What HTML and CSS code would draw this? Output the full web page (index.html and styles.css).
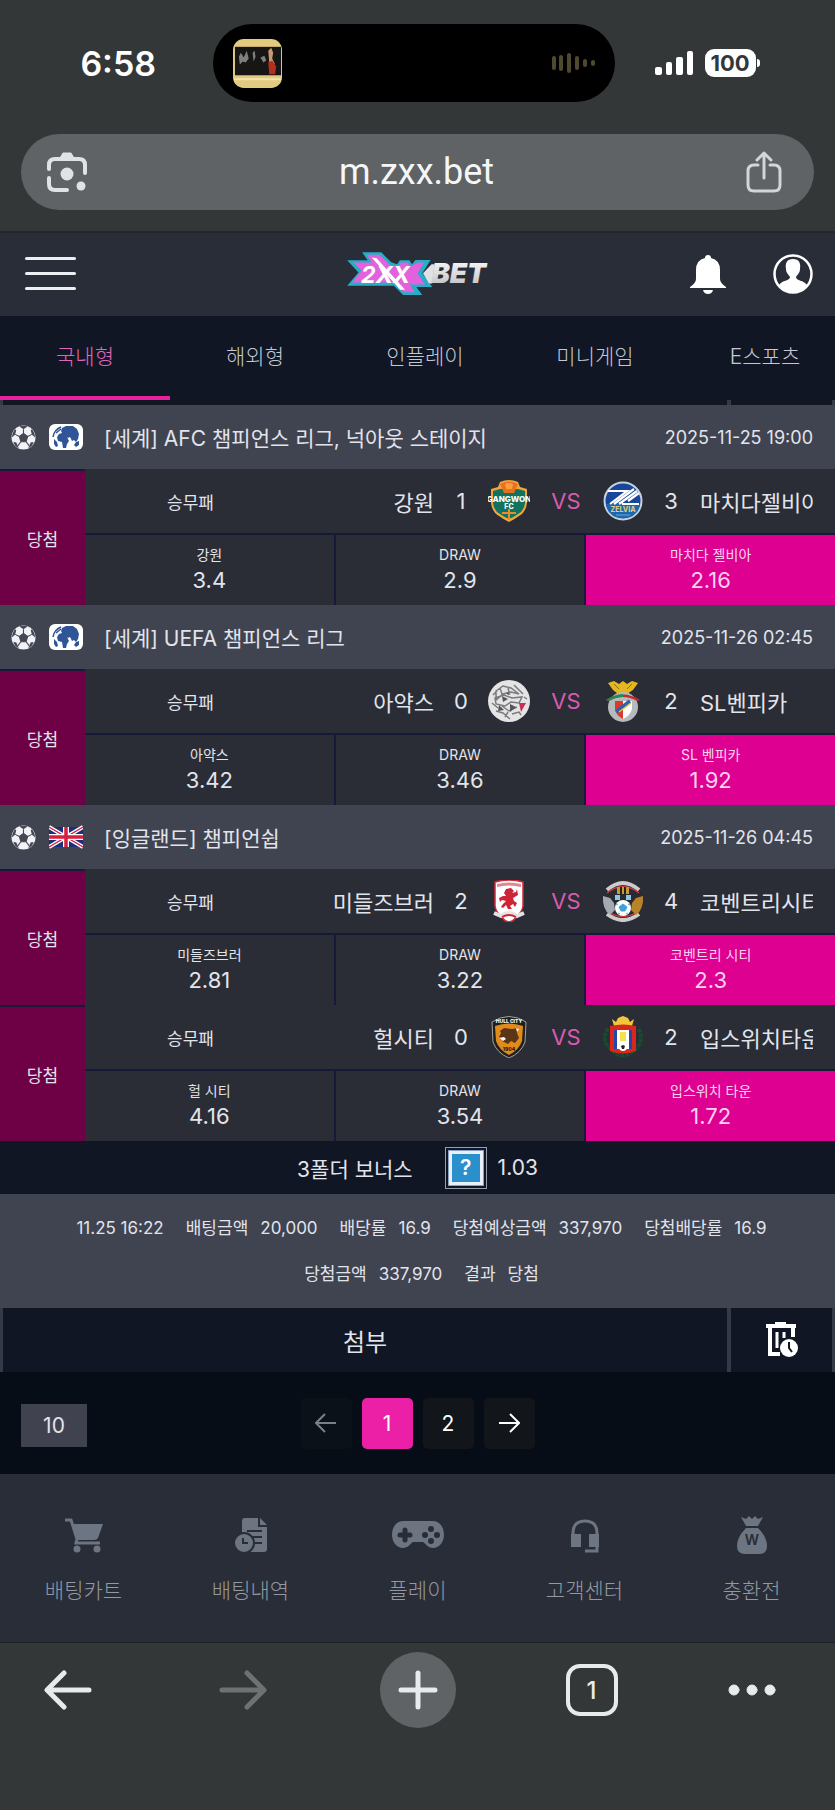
FILE: index.html
```html
<!DOCTYPE html>
<html lang="ko">
<head>
    <meta charset="UTF-8">
    <meta name="viewport" content="width=device-width, initial-scale=1.0">
    <title>ZXX BET</title>
    <link rel="stylesheet" href="styles.css">
</head>
<body>
    <!-- shared icons -->
    <svg class="sprite" aria-hidden="true">
        <symbol id="ball" viewBox="0 0 24 24">
            <circle cx="12" cy="12" r="11.500" fill="#f2f3f6"/>
            <path d="M12 8l4 3-1.500 5h-5L8 11zM12 8V4M16 11l4-2M14.500 16l3 4M9.500 16l-3 4M8 11L4 9" fill="#454854" stroke="#454854"/>
            <path d="M8 1.500l4 2.500 4-2.500q-4-1.500-8 0zM20 9l3 3q0-5-3-8l-1 1zM4 9l-3 3q0-5 3-8l1 1zM17.500 20l-1 2.500q4-2 5.500-6h-3zM6.500 20l1 2.500q-4-2-5.500-6h3z" fill="#454854"/>
        </symbol>
        <symbol id="world" viewBox="0 0 34 26">
            <rect width="34" height="26" rx="6" fill="#fff"/>
            <path d="M13 4l4-2h7l4 3 2 5-1 5-2 3-2-2-2 1-2-4-2 1-1-1 2 4-2 3-1 4h-3l-1-6-4-1-1-4 2-3 3-1-1-2z" fill="#2f5596"/>
            <path d="M4 13q1-7 8-10M7 9l5-4" fill="none" stroke="#2f5596" stroke-width="1.500"/>
            <path d="M5 15l3 3 1 4-2 1-2-3zM27 18l3-1v4l-3 2-2-2z" fill="#2f5596"/>
        </symbol>
        <symbol id="uk" viewBox="0 0 34 20">
            <rect width="34" height="20" fill="#1c2f7c"/>
            <path d="M0 0l34 20M34 0L0 20" stroke="#fff" stroke-width="4"/>
            <path d="M0 0l34 20M34 0L0 20" stroke="#d81f3c" stroke-width="1.300"/>
            <path d="M17 0v20M0 10h34" stroke="#fff" stroke-width="6"/>
            <path d="M17 0v20M0 10h34" stroke="#d81f3c" stroke-width="3.500"/>
        </symbol>
    </svg>

    <div class="status-bar">
        <span class="clock">6:58</span>
        <div class="island">
            <svg class="album" viewBox="0 0 50 50" aria-hidden="true">
                <rect width="50" height="50" rx="11" fill="#e2cb80"/>
                <rect x="2" y="8" width="47" height="29" fill="#171614"/>
                <path d="M6 18l2-4 3 5 3-7 2 8-3 4-3-1-3 3zM20 14l2-2 1 6-2 5zM28 19l4-2 2 5-3 2z" fill="#7d817d"/>
                <path d="M36 12l3-3 2 5-1 6 3 6-6-2z" fill="#c99a72"/>
                <path d="M36 24l4-2 4 6-1 8h-6z" fill="#b5301c"/>
                <path d="M1 41h48" stroke="#f3e4ac" stroke-width="2"/>
            </svg>
            <svg class="wave" viewBox="0 0 44 20" aria-hidden="true">
                <path d="M3 5v10M10 4v12M18 2v16M26 5v10M34 8v4M42 9v2" stroke="#50492f" stroke-width="4" stroke-linecap="round"/>
            </svg>
        </div>
        <div class="signals">
            <svg class="bars" viewBox="0 0 38 26" aria-hidden="true">
                <rect x="0" y="17" width="7" height="8" rx="2"/>
                <rect x="11" y="12" width="6" height="13" rx="2"/>
                <rect x="21" y="7" width="7" height="18" rx="2"/>
                <rect x="32" y="1" width="6" height="24" rx="2"/>
            </svg>
            <span class="battery">100</span>
        </div>
    </div>

    <div class="address-bar">
        <svg class="lens" viewBox="0 0 40 40" fill="none" stroke="#dfe3e8" stroke-width="4" stroke-linecap="round" aria-hidden="true">
            <path d="M2 17v-4q0-6 6-6h24q6 0 6 6v8M2 26v6q0 6 6 6h12"/>
            <path d="M13 6l3-5h8l3 5z" fill="#dfe3e8" stroke-width="1"/>
            <circle cx="20" cy="22" r="6.500" fill="#dfe3e8" stroke="none"/>
            <circle cx="34" cy="34" r="4.500" fill="#dfe3e8" stroke="none"/>
        </svg>
        <input class="address" type="text" value="m.zxx.bet" aria-label="주소">
        <svg class="share" viewBox="0 0 36 42" fill="none" stroke="#d3d6d9" stroke-width="3" stroke-linecap="round" stroke-linejoin="round" aria-hidden="true">
            <path d="M12 14H8q-6 0-6 6v14q0 6 6 6h20q6 0 6-6V20q0-6-6-6h-4M18 27V2M11 9l7-7 7 7"/>
        </svg>
    </div>

    <header class="header">
        <button class="menu-btn" aria-label="메뉴"><i></i><i></i><i></i></button>
        <svg class="logo" viewBox="50 34 438 136" role="img" aria-label="ZXX BET">
            <defs>
                <linearGradient id="silver" x1="0" y1="0" x2="0" y2="1">
                    <stop offset="0" stop-color="#fff"/>
                    <stop offset="1" stop-color="#b9b9bd"/>
                </linearGradient>
            </defs>
            <path d="M52 62h62L97 38h58l30 30 18 6 8-12h29l8 12 10-13h46l-25 40 30 42h-48l18 24h-58l-28-28H52l34-40z" fill="#25aec6"/>
            <path d="M70 69h56l-14-24h38l36 36 24-5 4-7h20l10 12 20-12h20l-19 32 22 34h-46l16 24h-34l-30-30H66l30-36z" fill="#e361dd"/>
            <path d="M126 54l15 2 86 95h-15z" fill="#fff"/>
            <text x="94" y="130" class="logo-mark">2XX</text>
            <path d="M281 101l26-27h9l-7 58h-10z" fill="#e1e1e4"/>
            <text x="306" y="132" class="logo-name">BET</text>
        </svg>
        <div class="header-actions">
            <button class="icon-btn" aria-label="알림">
                <svg width="38" height="40" viewBox="0 0 38 40" fill="#fff">
                    <path d="M19 1q3 0 3 3 9 2 9 12v9q0 4 6 8v1H1v-1q6-4 6-8v-9Q7 6 16 4q0-3 3-3zM14 36h10q-1 4-5 4t-5-4z"/>
                </svg>
            </button>
            <button class="icon-btn" aria-label="내 정보">
                <svg width="40" height="40" viewBox="0 0 40 40">
                    <circle cx="20" cy="20" r="18.500" fill="none" stroke="#fff" stroke-width="2.500"/>
                    <path d="M20 5c6 0 8 4 7 10 0 4-3 6-4 8 0 4 8 3 11 8-3 5-8 8-14 8S9 36 6 31c3-5 11-4 11-8-1-2-4-4-4-8-1-6 1-10 7-10z" fill="#fff"/>
                </svg>
            </button>
        </div>
    </header>

    <nav class="tabs">
        <a class="tab active" href="#">국내형</a>
        <a class="tab" href="#">해외형</a>
        <a class="tab" href="#">인플레이</a>
        <a class="tab" href="#">미니게임</a>
        <a class="tab" href="#">E스포츠</a>
    </nav>

    <main>
        <!-- tail of the previous slip -->
        <div class="slip-actions tail"><span class="attach"></span><span class="delete"></span></div>

        <section class="league">
            <div class="league-head">
                <svg class="ball"><use href="#ball"/></svg>
                <svg class="flag"><use href="#world"/></svg>
                <h2 class="league-name">[세계] AFC 챔피언스 리그, 넉아웃 스테이지</h2>
                <time class="league-date">2025-11-25 19:00</time>
            </div>
            <div class="game">
                <div class="result">당첨</div>
                <div class="game-body">
                    <div class="match">
                        <span class="type">승무패</span>
                        <span class="team home">강원</span>
                        <span class="score">1</span>
                        <svg class="badge" viewBox="0 0 42 42">
                            <path d="M12 2q9-4 18 0l2 5 7 2v14q-1 9-8 13-4 3-10 6-6-3-10-6-7-4-8-13V9l7-2z" fill="#f2a53a"/>
                            <path d="M5 11l7-2h18l7 2v12q-1 8-7 11-4 3-9 5-5-2-9-5-6-3-7-11z" fill="#11735f"/>
                            <path d="M12 4q9-5 18 0l-4 9H16z" fill="#ec6f1f"/>
                            <path d="M17 4q4-2 8 0l-1 5h-6z" fill="#f7a13c"/>
                            <path d="M14 33h14M21 29v11" stroke="#ec8b2a" stroke-width="2"/>
                            <text x="21" y="22" class="badge-text gangwon">GANGWON</text>
                            <text x="21" y="29" class="badge-text">FC</text>
                        </svg>
                        <span class="vs">VS</span>
                        <svg class="badge" viewBox="0 0 42 42">
                            <circle cx="21" cy="21" r="18.500" fill="#18469a" stroke="#c5d0e0" stroke-width="2"/>
                            <path d="M4 24h34q-2 14-17 14T4 24z" fill="#1d67ad"/>
                            <path d="M6 11h19L8 24M12 24L32 9M17 24L35 11M20 24h17M26 21l11-8" stroke="#fff" stroke-width="2.200" fill="none"/>
                            <text x="21" y="32" class="badge-text zelvia">ZELVIA</text>
                            <path d="M14 35h14" stroke="#66a8d8"/>
                        </svg>
                        <span class="score">3</span>
                        <span class="team away">마치다젤비아</span>
                    </div>
                    <div class="odds">
                        <div class="odd"><span>강원</span><b>3.4</b></div>
                        <div class="odd"><span>DRAW</span><b>2.9</b></div>
                        <div class="odd win"><span>마치다 젤비아</span><b>2.16</b></div>
                    </div>
                </div>
            </div>
        </section>

        <section class="league">
            <div class="league-head">
                <svg class="ball"><use href="#ball"/></svg>
                <svg class="flag"><use href="#world"/></svg>
                <h2 class="league-name">[세계] UEFA 챔피언스 리그</h2>
                <time class="league-date">2025-11-26 02:45</time>
            </div>
            <div class="game">
                <div class="result">당첨</div>
                <div class="game-body">
                    <div class="match">
                        <span class="type">승무패</span>
                        <span class="team home">아약스</span>
                        <span class="score">0</span>
                        <svg class="badge" viewBox="0 0 42 42">
                            <circle cx="21" cy="21" r="21" fill="#e4e4e5"/>
                            <path d="M8 11l7-5 8 2 8 6-8-2-8 2-7 6zM7 18l9-3 8 3 10-1-3 6-8-1-6 4-9-2zM14 26l7 5 8-4M8 31l7 2 7 6M4 23l6 5M24 34l7-2 2 3M26 5l9 9M5 15l4-4M17 37l3-5M12 8l2 6M20 7l1 6M36 17l3 2" fill="none" stroke="#7b7b7e" stroke-width="1.500"/>
                            <path d="M14 16l6 3-5 3zM22 24l6 3-6 5zM11 25l5 5-6 1zM18 12l5 2-3 1z" fill="#55565a"/>
                            <path d="M31 23h7l-5 9z" fill="#c62f5a"/>
                        </svg>
                        <span class="vs">VS</span>
                        <svg class="badge" viewBox="0 0 42 42">
                            <path d="M6 3l6-2 5 3 4-3 4 3 5-3 6 2-5 7-6 4-2 3h-5l-2-3-5-4z" fill="#e4b71f"/>
                            <path d="M12 4l5 5M30 4l-5 5" stroke="#8c6d14"/>
                            <circle cx="21" cy="27" r="15" fill="#b5babd"/>
                            <path d="M4 20q17-11 34 0l-3 1q-14-8-28 0z" fill="#c62b2b"/>
                            <path d="M4 20q7-5 17-6v3q-8 0-14 4z" fill="#1f8c52"/>
                            <path d="M13 21h17v8q-2 7-9 10-7-3-8-10z" fill="#fff"/>
                            <path d="M13 21h8v18q-7-3-8-10z" fill="#d83a2c"/>
                            <path d="M14 32l14-11" stroke="#2c65ad" stroke-width="4"/>
                            <path d="M17 32l12-9" stroke="#e5c63c" stroke-width="1.500"/>
                        </svg>
                        <span class="score">2</span>
                        <span class="team away">SL벤피카</span>
                    </div>
                    <div class="odds">
                        <div class="odd"><span>아약스</span><b>3.42</b></div>
                        <div class="odd"><span>DRAW</span><b>3.46</b></div>
                        <div class="odd win"><span>SL 벤피카</span><b>1.92</b></div>
                    </div>
                </div>
            </div>
        </section>

        <section class="league">
            <div class="league-head">
                <svg class="ball"><use href="#ball"/></svg>
                <svg class="flag"><use href="#uk"/></svg>
                <h2 class="league-name">[잉글랜드] 챔피언쉽</h2>
                <time class="league-date">2025-11-26 04:45</time>
            </div>
            <div class="game">
                <div class="result">당첨</div>
                <div class="game-body">
                    <div class="match">
                        <span class="type">승무패</span>
                        <span class="team home">미들즈브러</span>
                        <span class="score">2</span>
                        <svg class="badge" viewBox="0 0 42 42">
                            <path d="M7 2q14-4 28 0v24q-1 7-7 10-1 5-7 6-6-1-7-6-6-3-7-10z" fill="#fff" stroke="#d3293a" stroke-width="1.500"/>
                            <path d="M9 4q12-3 24 0v3q-12-3-24 0z" fill="#e18790"/>
                            <path d="M18 9l5-1 3 3-2 2 4-1 1-3 1 6-5 3 1 3 3 2-2 4-2-3-3 2 2 3h-4l-2-4-3 3-2-1 2-3 3-3-4-1-2 2-1-4 4-2h3l-2-3z" fill="#cf2436"/>
                            <path d="M6 33l7 3q8-6 16 0l7-3" stroke="#e4e4e4" stroke-width="4" fill="none"/>
                            <path d="M14 37q7-4 14 0" stroke="#cf2436" stroke-width="2" fill="none"/>
                        </svg>
                        <span class="vs">VS</span>
                        <svg class="badge" viewBox="0 0 42 42">
                            <circle cx="21" cy="21" r="20" fill="#272b33"/>
                            <path d="M5 10q16-14 32 0M5 34q16 12 32 0" stroke="#ccc" stroke-width="4" fill="none"/>
                            <path d="M5 13q16-13 32 0M5 31q16 11 32 0" stroke="#cb3d3d" stroke-width="1.500" fill="none"/>
                            <path d="M1 16l7 2 4 5 1 7-5 5q-8-6-7-19z" fill="#a3aab2"/>
                            <path d="M41 16l-7 2-4 5-1 7 5 5q8-6 7-19z" fill="#b98429"/>
                            <path d="M15 7h12v7H15z" fill="#c59a32"/>
                            <path d="M19 7v8M23 7v8" stroke="#222" stroke-width="2"/>
                            <path d="M13 15h5v5h-5zM24 15h5v5h-5z" fill="#8fc8de"/>
                            <circle cx="21" cy="28" r="8" fill="#fff"/>
                            <path d="M21 24l4 3-2 4h-4l-2-4zM14 25l2-1M28 25l-2-1M16 33l2 1M26 33l-2 1" fill="#3fa3d8" stroke="#3fa3d8"/>
                        </svg>
                        <span class="score">4</span>
                        <span class="team away">코벤트리시티</span>
                    </div>
                    <div class="odds">
                        <div class="odd"><span>미들즈브러</span><b>2.81</b></div>
                        <div class="odd"><span>DRAW</span><b>3.22</b></div>
                        <div class="odd win"><span>코벤트리 시티</span><b>2.3</b></div>
                    </div>
                </div>
            </div>
            <div class="game">
                <div class="result">당첨</div>
                <div class="game-body">
                    <div class="match">
                        <span class="type">승무패</span>
                        <span class="team home">헐시티</span>
                        <span class="score">0</span>
                        <svg class="badge" viewBox="0 0 42 42">
                            <path d="M4 6q17-11 34 0l-1 20q-4 11-16 16Q9 37 5 26z" fill="#1f1f1f" stroke="#a8a49c" stroke-width="1"/>
                            <path d="M7 10q14-5 28 0l-1 15q-3 9-13 14Q11 34 8 25z" fill="#e08b1c"/>
                            <path d="M12 15l4-3 8 1 6-1-1 5 2 5-4 5-4-2-3 3-6-3 2-3-5-1 2-4z" fill="#5c3516"/>
                            <path d="M12 22l4-1 2 2-3 2zM28 12l3 1-2 3z" fill="#fff"/>
                            <text x="21" y="7" class="badge-text hull">HULL CITY</text>
                            <text x="21" y="35" class="badge-text dark">1904</text>
                        </svg>
                        <span class="vs">VS</span>
                        <svg class="badge" viewBox="0 0 42 42">
                            <path d="M6 12q-8 14 5 23 10 9 20 0 13-9 5-23" fill="none" stroke="#1a4a30" stroke-width="4" stroke-dasharray="4 1"/>
                            <path d="M10 3l4 3 2-4 5-2 5 2 2 4 4-3-2 7H12z" fill="#f1c83b"/>
                            <path d="M8 10q13-3 26 0v25q-13 5-26 0z" fill="#d8271c"/>
                            <path d="M12 14h18v19H12z" fill="#2743a5"/>
                            <path d="M15 14h12v19H15z" fill="#fff"/>
                            <path d="M18 16h6v9h-6z" fill="#f4e24b"/>
                            <circle cx="21" cy="31" r="4" fill="#fff"/>
                            <path d="M19 30l2-1 2 1-1 3h-2z" fill="#222"/>
                        </svg>
                        <span class="score">2</span>
                        <span class="team away">입스위치타운</span>
                    </div>
                    <div class="odds">
                        <div class="odd"><span>헐 시티</span><b>4.16</b></div>
                        <div class="odd"><span>DRAW</span><b>3.54</b></div>
                        <div class="odd win"><span>입스위치 타운</span><b>1.72</b></div>
                    </div>
                </div>
            </div>
        </section>

        <div class="bonus">
            <span>3폴더 보너스</span>
            <span class="bonus-icon"><i>?</i></span>
            <span>1.03</span>
        </div>

        <dl class="summary">
            <div><dt>11.25 16:22</dt></div>
            <div><dt>배팅금액</dt><dd>20,000</dd></div>
            <div><dt>배당률</dt><dd>16.9</dd></div>
            <div><dt>당첨예상금액</dt><dd>337,970</dd></div>
            <div><dt>당첨배당률</dt><dd>16.9</dd></div>
            <div><dt>당첨금액</dt><dd>337,970</dd></div>
            <div><dt>결과</dt><dd>당첨</dd></div>
        </dl>

        <div class="slip-actions">
            <button class="attach">첨부</button>
            <button class="delete" aria-label="내역 삭제">
                <svg width="34" height="36" viewBox="0 0 34 36" fill="none" stroke="#fff">
                    <path d="M1 4h30M10 2h11" stroke-width="4"/>
                    <path d="M5 5v27h10M28 5v10" stroke-width="4"/>
                    <path d="M12 10v16M19 10v6" stroke-width="3"/>
                    <circle cx="24" cy="26" r="9" fill="#fff" stroke="none"/>
                    <path d="M24 20v6l3 4" stroke="#101624" stroke-width="2"/>
                </svg>
            </button>
        </div>
    </main>

    <div class="pager">
        <select class="page-size" aria-label="페이지당 개수">
            <option>10</option>
            <option>20</option>
        </select>
        <div class="pages">
            <button class="page" aria-label="이전" disabled>
                <svg width="22" height="20" viewBox="0 0 22 20"><path d="M21 10H2M10 1l-9 9 9 9"/></svg>
            </button>
            <button class="page current">1</button>
            <button class="page">2</button>
            <button class="page" aria-label="다음">
                <svg width="22" height="20" viewBox="0 0 22 20"><path d="M1 10h19M12 1l9 9-9 9"/></svg>
            </button>
        </div>
    </div>

    <nav class="bottom-nav">
        <a href="#">
            <svg width="40" height="38" viewBox="0 0 40 38">
                <path d="M1 4h6l6 19-1 4h24" fill="none" stroke="currentColor" stroke-width="3"/>
                <path d="M9 8h30l-5 14q-1 2-4 2H14z"/>
                <circle cx="13" cy="33" r="3.500"/><circle cx="33" cy="33" r="3.500"/>
            </svg>
            배팅카트
        </a>
        <a href="#">
            <svg width="34" height="38" viewBox="0 0 34 38">
                <path d="M8 5q0-3 3-3h13v9h9v22q0 3-3 3H8z"/>
                <path d="M26 2l7 7h-7z"/>
                <path d="M13 15h15M18 21h10M20 27h8" stroke="#292d37" stroke-width="2"/>
                <circle cx="10" cy="27" r="10" stroke="#292d37" stroke-width="2"/>
                <path d="M9 22v5h5" fill="none" stroke="#292d37" stroke-width="2"/>
            </svg>
            배팅내역
        </a>
        <a href="#">
            <svg width="54" height="38" viewBox="0 0 54 38">
                <path d="M13 5h28c8 0 12 6 12 14 0 7-5 13-11 13-5 0-7-4-10-6H22c-3 2-5 6-10 6C6 32 1 26 1 19 1 11 5 5 13 5z"/>
                <path d="M14 14v10M9 19h10" stroke="#292d37" stroke-width="5" stroke-linecap="round"/>
                <g fill="#292d37"><circle cx="40" cy="13" r="3"/><circle cx="40" cy="25" r="3"/><circle cx="34" cy="19" r="3"/><circle cx="46" cy="19" r="3"/></g>
            </svg>
            플레이
        </a>
        <a href="#">
            <svg width="30" height="38" viewBox="0 0 30 38">
                <path d="M3 22v-5Q3 5 15 5t12 12v18H15" fill="none" stroke="currentColor" stroke-width="3"/>
                <path d="M1 18h10v13H1zM19 18h10v13H19z"/>
            </svg>
            고객센터
        </a>
        <a href="#">
            <svg width="30" height="38" viewBox="0 0 30 38">
                <path d="M4 1l5 2 3-3 3 3 3-3 3 3 5-2-5 9H9z"/>
                <path d="M9 12h12q9 9 9 18 0 8-8 8H8q-8 0-8-8 0-9 9-18z"/>
                <text x="15" y="29" class="won">W</text>
            </svg>
            충환전
        </a>
    </nav>

    <div class="toolbar">
        <div class="toolbar-side left">
            <button aria-label="뒤로"><svg width="48" height="40" viewBox="0 0 48 40"><path d="M45 20H4M20 3L3 20l17 17"/></svg></button>
            <button class="dim" aria-label="앞으로"><svg width="48" height="40" viewBox="0 0 48 40"><path d="M3 20h41M28 3l17 17-17 17"/></svg></button>
        </div>
        <button class="new-tab" aria-label="새 탭"><svg width="40" height="40" viewBox="0 0 40 40"><path d="M20 3v34M3 20h34"/></svg></button>
        <div class="toolbar-side right">
            <button class="tab-count">1</button>
            <button aria-label="더보기"><svg width="48" height="12" viewBox="0 0 48 12"><circle cx="6" cy="6" r="5"/><circle cx="24" cy="6" r="5"/><circle cx="42" cy="6" r="5"/></svg></button>
        </div>
    </div>
</body>
</html>
```

FILE: styles.css
```css
* {
    margin: 0;
    padding: 0;
    box-sizing: border-box;
}
body {
    font-family: Inter, 'Noto Sans CJK KR', sans-serif;
    font-size: 21px;
    color: #e2e4ec;
    background: #333738;
}
button,
select,
input {
    font: inherit;
    color: inherit;
    border: 0;
    background: none;
}
a {
    color: inherit;
    text-decoration: none;
}
svg {
    display: block;
    flex: none;
}
i,
b {
    font-style: normal;
    font-weight: 400;
}
.sprite {
    display: none;
}

/* phone status bar */
.status-bar {
    display: grid;
    grid-template-columns: 1fr 402px 1fr;
    align-items: center;
    padding: 24px 8px 32px 0;
}
.clock {
    font-size: 34px;
    font-weight: 600;
    color: #fff;
    text-align: center;
    padding-left: 24px;
}
.island {
    display: flex;
    align-items: center;
    justify-content: space-between;
    height: 78px;
    padding: 0 20px;
    border-radius: 39px;
    background: #000;
}
.album {
    width: 49px;
    height: 49px;
}
.wave {
    width: 44px;
    height: 20px;
}
.signals {
    display: flex;
    align-items: center;
    gap: 12px;
    padding-left: 40px;
}
.bars {
    width: 38px;
    height: 26px;
    fill: #fff;
}
.battery {
    position: relative;
    width: 51px;
    border-radius: 9px;
    background: #fff;
    color: #333738;
    font-size: 22px;
    font-weight: 700;
    line-height: 28px;
    text-align: center;
}
.battery::after {
    content: '';
    position: absolute;
    right: -4px;
    top: 10px;
    width: 3px;
    height: 8px;
    border-radius: 0 3px 3px 0;
    background: #fff;
}

/* address bar */
.address-bar {
    display: flex;
    align-items: center;
    justify-content: space-between;
    height: 76px;
    margin: 0 21px 21px;
    padding: 0 32px 0 26px;
    border-radius: 38px;
    background: #5f6365;
}
.lens {
    width: 40px;
    height: 40px;
}
.address {
    flex: 1;
    min-width: 0;
    font-family: Roboto, sans-serif;
    font-size: 36px;
    color: #f5f6f7;
    text-align: center;
}
.share {
    width: 36px;
    height: 42px;
}

/* site header */
.header {
    display: grid;
    grid-template-columns: 1fr auto 1fr;
    align-items: center;
    height: 85px;
    padding: 0 22px 2px 25px;
    border-top: 2px solid #23272c;
    background: #292d37;
}
.menu-btn {
    display: flex;
    flex-direction: column;
    gap: 12px;
    width: 51px;
}
.menu-btn i {
    height: 3px;
    border-radius: 2px;
    background: #eceef2;
}
.logo {
    width: 146px;
    height: 45px;
}
.logo-mark,
.logo-name {
    font-weight: 700;
    font-style: italic;
    font-size: 70px;
    fill: #fff;
}
.logo-name {
    font-size: 84px;
    font-weight: 900;
    fill: url(#silver);
}
.header-actions {
    display: flex;
    justify-content: flex-end;
    align-items: center;
    gap: 46px;
}

/* category tabs */
.tabs {
    display: flex;
    overflow: hidden;
    background: #101624;
}
.tab {
    flex: none;
    width: 170px;
    line-height: 78px;
    padding-top: 2px;
    border-bottom: 4px solid transparent;
    font-weight: 300;
    color: #c4c8d0;
    text-align: center;
}
.tab.active {
    color: #e266b8;
    border-color: #e8229f;
}

/* bet slip */
main {
    background: #101624;
}
.slip-actions {
    display: flex;
    gap: 4px;
    height: 64px;
    padding: 0 3px;
    background: #343a48;
}
.slip-actions.tail {
    height: 5px;
}
.attach {
    flex: 1;
    font-size: 24px;
    background: #101624;
}
.delete {
    display: flex;
    align-items: center;
    justify-content: center;
    width: 101px;
    background: #101624;
}
.league-head {
    display: flex;
    align-items: center;
    height: 64px;
    padding: 0 22px 0 11px;
    background: #404350;
}
.ball {
    width: 25px;
    height: 25px;
    margin-right: 13px;
}
.flag {
    width: 34px;
    height: 26px;
    margin-right: 21px;
}
.league-name {
    flex: 1;
    font-size: 21px;
    font-weight: 400;
}
.league-date {
    font-size: 18px;
}
.game {
    display: flex;
    background: #141a38;
}
.result {
    display: flex;
    align-items: center;
    justify-content: center;
    width: 85px;
    margin-top: 2px;
    font-size: 17px;
    background: #6e0046;
}
.game-body {
    flex: 1;
    min-width: 0;
}
.match {
    display: flex;
    align-items: center;
    height: 64px;
    padding-right: 22px;
    background: #2a2d36;
}
.type {
    width: 29%;
    font-size: 17px;
    text-align: center;
}
.team {
    font-size: 22px;
    white-space: nowrap;
    overflow: hidden;
}
.home {
    flex: 1;
    text-align: right;
}
.away {
    width: 115px;
    padding-left: 2px;
}
.score {
    width: 54px;
    font-size: 22px;
    text-align: center;
}
.badge {
    width: 42px;
    height: 42px;
}
.badge-text {
    font-size: 7px;
    font-weight: 800;
    fill: #fff;
    text-anchor: middle;
}
.gangwon {
    font-size: 8px;
}
.zelvia {
    fill: #d9c88a;
}
.hull {
    font-size: 5px;
}
.dark {
    font-size: 5px;
    fill: #2b1a0a;
}
.vs {
    width: 72px;
    font-size: 22px;
    color: #d85bb3;
    text-align: center;
}
.odds {
    display: grid;
    grid-template-columns: repeat(3, 1fr);
    gap: 2px;
    padding-top: 2px;
}
.odd {
    display: flex;
    flex-direction: column;
    align-items: center;
    justify-content: center;
    height: 70px;
    background: #2a2d36;
}
.odd span {
    font-size: 14px;
    line-height: 20px;
}
.odd b {
    font-size: 22px;
    line-height: 30px;
}
.odd.win {
    color: #fbd3ef;
    background: #dd0091;
}
.bonus {
    display: flex;
    align-items: center;
    justify-content: center;
    height: 53px;
}
.bonus-icon {
    width: 42px;
    margin: 0 11px 0 32px;
    padding: 3px;
    border: 1px solid #9a9eac;
}
.bonus-icon i {
    display: block;
    border: 3px solid #e8f1fa;
    outline: 1px solid #8a9fc4;
    background: #2b8fcc;
    color: #fff;
    font-weight: 600;
    line-height: 28px;
    text-align: center;
}
.summary {
    display: flex;
    flex-wrap: wrap;
    justify-content: center;
    gap: 0 22px;
    padding: 11px 16px 11px 24px;
    font-size: 17px;
    line-height: 46px;
    background: #404350;
}
.summary div {
    display: flex;
    gap: 12px;
}

/* pagination */
.pager {
    display: grid;
    grid-template-columns: 1fr auto 1fr;
    align-items: center;
    height: 102px;
    padding: 0 21px;
    background: #070d17;
}
.page-size {
    appearance: none;
    width: 66px;
    height: 43px;
    margin-top: 4px;
    background: #40434f;
    text-align: center;
    text-align-last: center;
}
.pages {
    display: flex;
    gap: 10px;
}
.page {
    display: flex;
    align-items: center;
    justify-content: center;
    width: 51px;
    height: 51px;
    border-radius: 5px;
    background: #121519;
    color: #fff;
}
.page svg {
    fill: none;
    stroke: currentColor;
    stroke-width: 2;
}
.page:disabled {
    background: #0b1119;
    color: #7b7f86;
}
.page.current {
    background: #ec20a6;
}

/* site bottom menu */
.bottom-nav {
    display: grid;
    grid-template-columns: repeat(5, 1fr);
    padding: 42px 0 36px;
    border-bottom: 1px solid #1d2126;
    background: #292d37;
    color: #9498a2;
    font-weight: 300;
}
.bottom-nav a {
    display: flex;
    flex-direction: column;
    align-items: center;
    gap: 22px;
    line-height: 30px;
}
.bottom-nav svg {
    color: #6c7581;
    fill: currentColor;
}
.won {
    font-size: 14px;
    font-weight: 600;
    fill: #292d37;
    text-anchor: middle;
}

/* browser toolbar */
.toolbar {
    display: grid;
    grid-template-columns: 1fr auto 1fr;
    align-items: center;
    padding: 9px 0 82px;
}
.toolbar-side {
    display: flex;
    align-items: center;
    justify-content: space-between;
}
.toolbar-side.left {
    padding: 0 113px 0 44px;
}
.toolbar-side.right {
    padding: 0 59px 0 110px;
}
.toolbar svg {
    fill: none;
    stroke: #e8eaec;
    stroke-width: 5;
    stroke-linecap: round;
    stroke-linejoin: round;
}
.toolbar .dim svg {
    stroke: #6f7274;
}
.toolbar circle {
    fill: #e8eaec;
    stroke-width: 1;
}
.new-tab {
    display: flex;
    align-items: center;
    justify-content: center;
    width: 76px;
    height: 76px;
    border-radius: 50%;
    background: #5f6365;
}
.tab-count {
    width: 52px;
    height: 52px;
    border: 4px solid #e8eaec;
    border-radius: 14px;
    font-size: 24px;
    font-weight: 500;
    color: #e8eaec;
}
```
